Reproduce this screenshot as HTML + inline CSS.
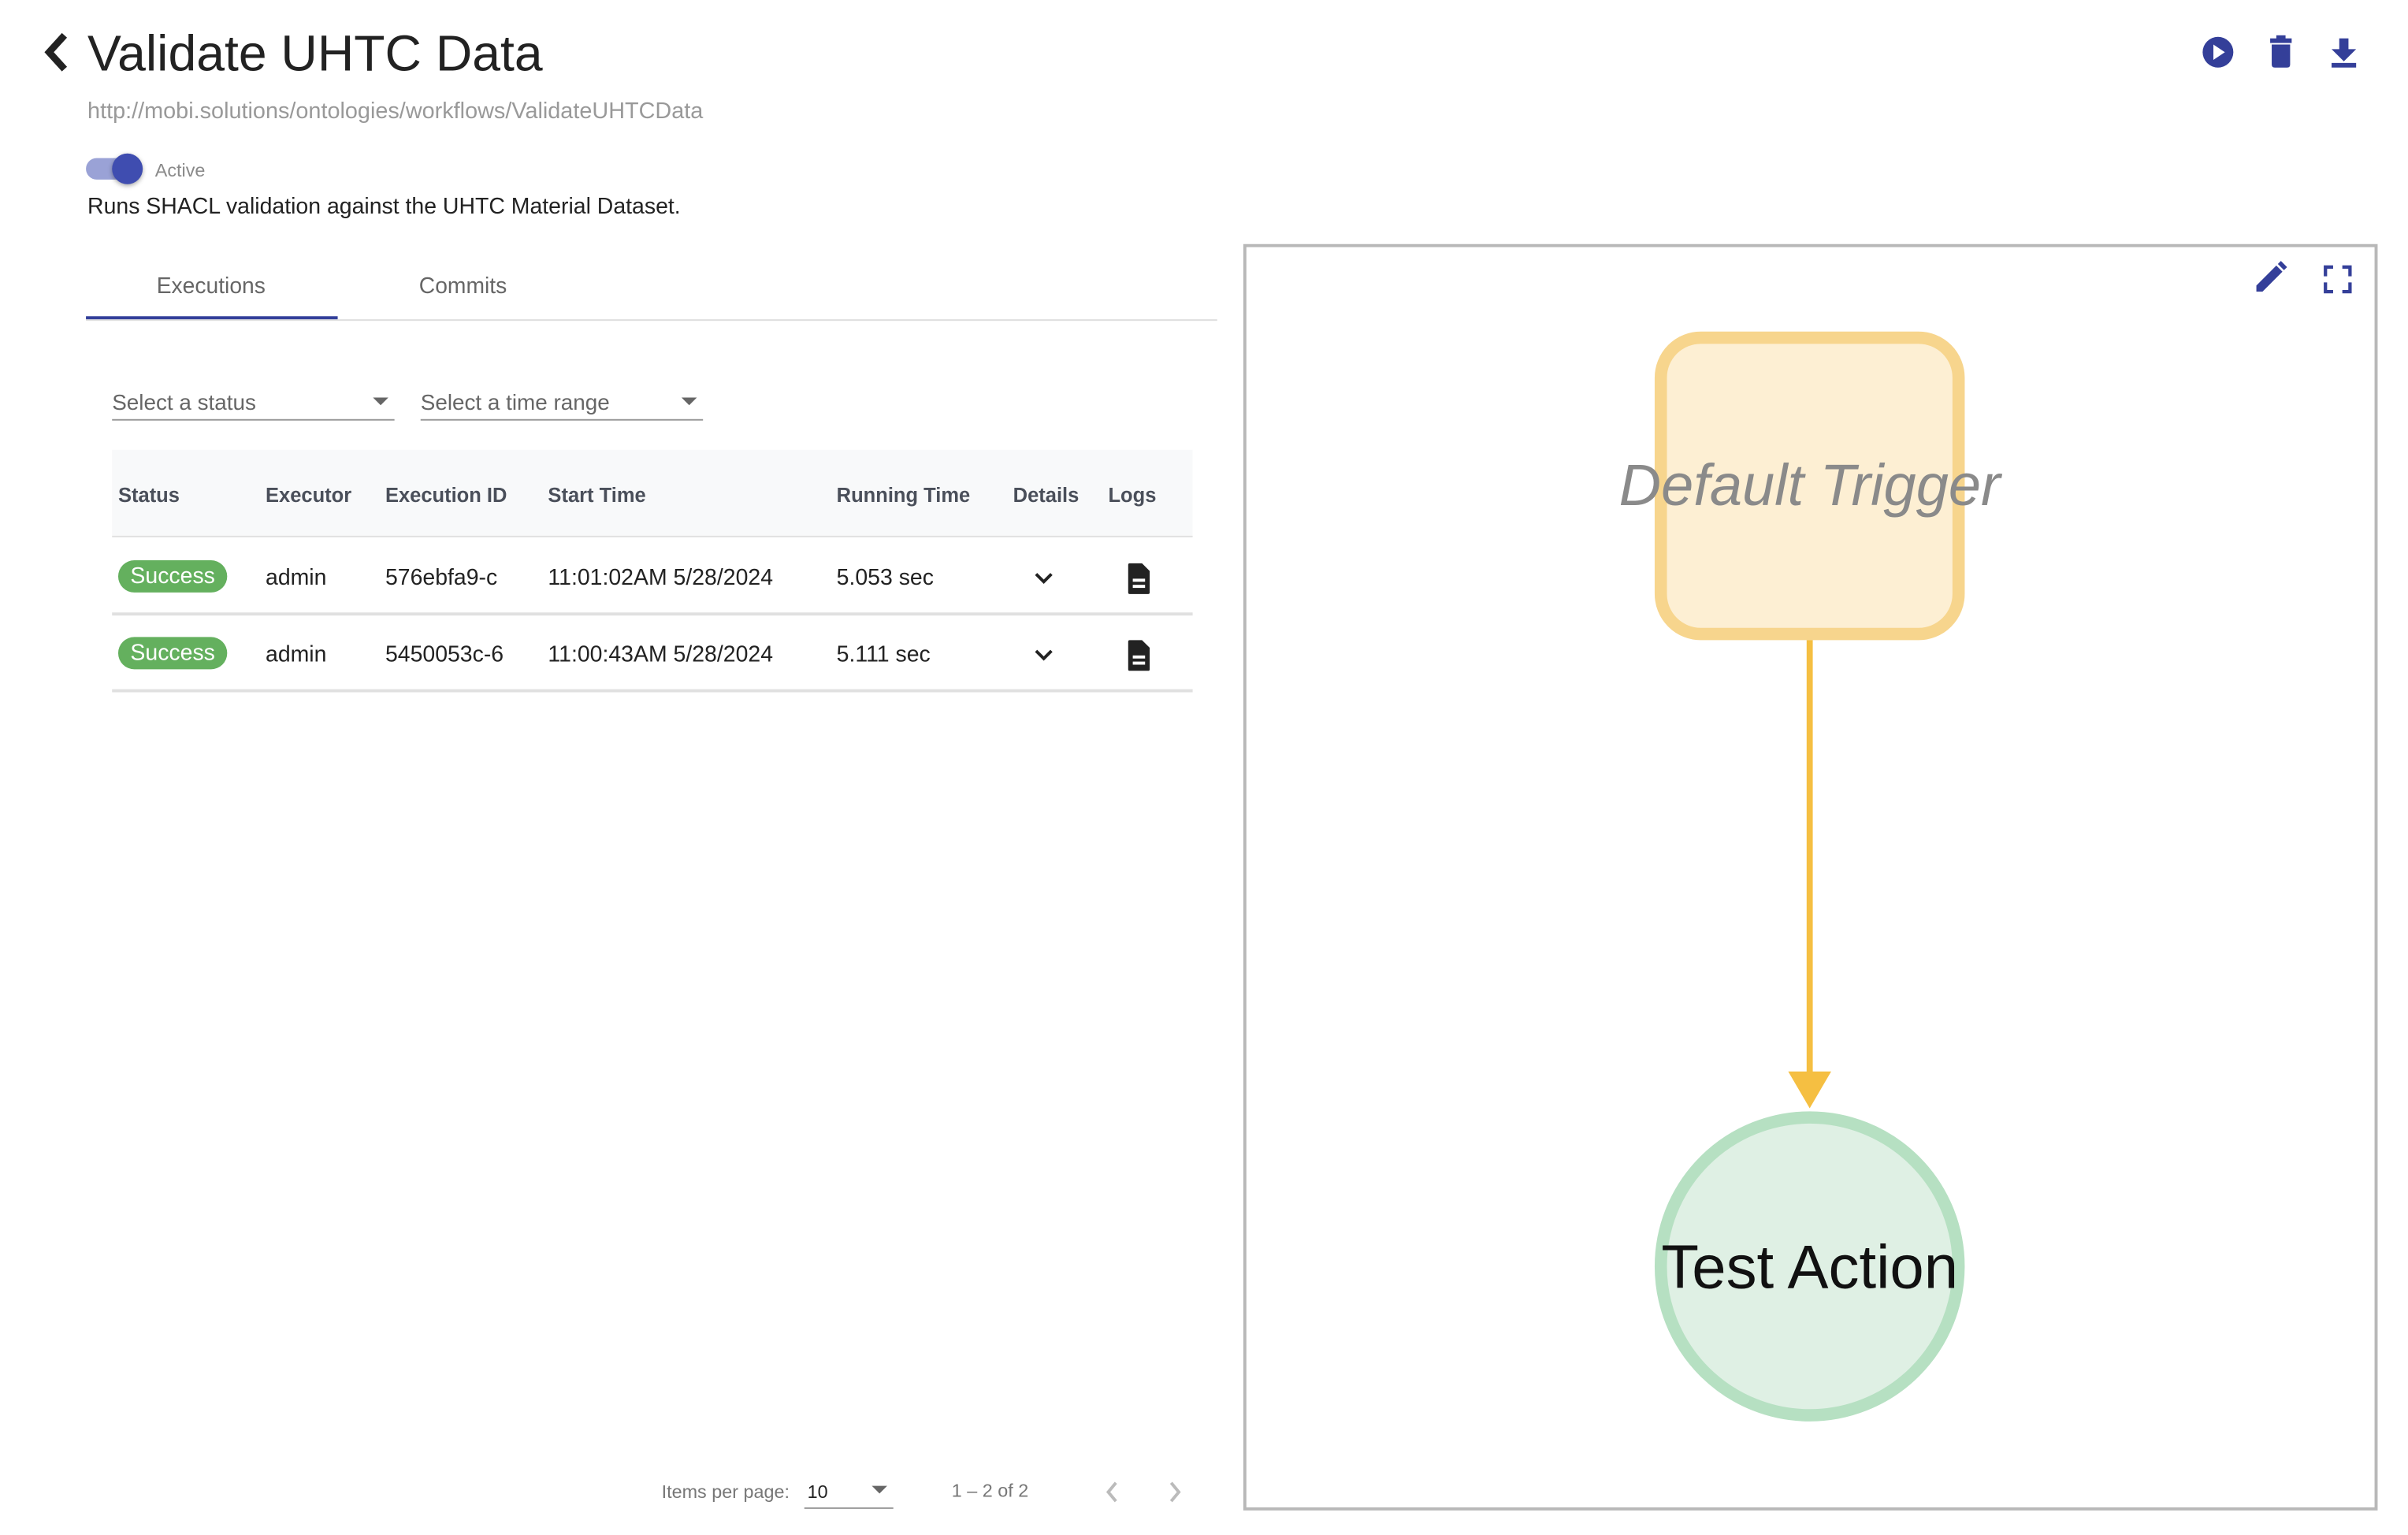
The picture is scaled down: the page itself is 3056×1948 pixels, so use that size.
<!DOCTYPE html>
<html><head><meta charset="utf-8"><style>
html,body{margin:0;padding:0;background:#fff;overflow:hidden}
body{width:3056px;height:1946px;font-family:"Liberation Sans",Arial,sans-serif}
#w{position:absolute;left:0;top:0;width:1570px;height:1000px;transform:scale(1.948);transform-origin:0 0}
.a{position:absolute;white-space:nowrap}
.th{font-size:13.1px;font-weight:bold;color:#4a4f5a;top:315px}
.td{font-size:14.6px;color:#222}
.badge{position:absolute;left:77px;width:71px;height:21px;border-radius:11px;background:#64b05e;color:#fff;font-size:14.6px;text-align:center;line-height:22px}
.hr{position:absolute;left:73px;width:704px;height:2px;background:#e0e0e0}
</style></head><body><div id="w">
<svg class="a" style="left:26px;top:20px" width="22" height="28" viewBox="0 0 22 28"><path d="M16 3 L6 14 L16 25" fill="none" stroke="#222" stroke-width="4.5" stroke-linejoin="miter"/></svg>
<div class="a" style="left:57px;top:16px;font-size:33px;color:#222">Validate UHTC Data</div>
<div class="a" style="left:57px;top:65px;font-size:14.8px;color:#999">http://mobi.solutions/ontologies/workflows/ValidateUHTCData</div>
<div class="a" style="left:56px;top:103px;width:34px;height:14px;border-radius:7px;background:#9aa2d6"></div>
<div class="a" style="left:73px;top:100px;width:20px;height:20px;border-radius:50%;background:#3f4db0;box-shadow:0 1px 3px rgba(0,0,0,.35)"></div>
<div class="a" style="left:101px;top:104px;font-size:12px;color:#8a8a8a">Active</div>
<div class="a" style="left:57px;top:127px;font-size:14.6px;color:#222">Runs SHACL validation against the UHTC Material Dataset.</div>

<div class="a" style="left:102px;top:179px;font-size:14.5px;color:#666">Executions</div>
<div class="a" style="left:273px;top:179px;font-size:14.5px;color:#666">Commits</div>
<div class="a" style="left:56px;top:208px;width:737px;height:1px;background:#ddd"></div>
<div class="a" style="left:56px;top:206px;width:164px;height:2px;background:#33409a"></div>

<div class="a" style="left:73px;top:255px;font-size:14.3px;color:#666">Select a status</div>
<div class="a" style="left:73px;top:273px;width:184px;height:1px;background:#999"></div>
<div class="a" style="left:243px;top:259px;border-left:5px solid transparent;border-right:5px solid transparent;border-top:5px solid #666"></div>
<div class="a" style="left:274px;top:255px;font-size:14.3px;color:#666">Select a time range</div>
<div class="a" style="left:274px;top:273px;width:184px;height:1px;background:#999"></div>
<div class="a" style="left:444px;top:259px;border-left:5px solid transparent;border-right:5px solid transparent;border-top:5px solid #666"></div>

<div class="a" style="left:73px;top:293px;width:704px;height:56px;background:#f8f9fa"></div>
<div class="a th" style="left:77px">Status</div>
<div class="a th" style="left:173px">Executor</div>
<div class="a th" style="left:251px">Execution ID</div>
<div class="a th" style="left:357px">Start Time</div>
<div class="a th" style="left:545px">Running Time</div>
<div class="a th" style="left:660px">Details</div>
<div class="a th" style="left:722px">Logs</div>
<div class="hr" style="top:349px;height:1px"></div>

<div class="badge" style="top:365px">Success</div>
<div class="a td" style="left:173px;top:369px">admin</div>
<div class="a td" style="left:251px;top:369px">576ebfa9-c</div>
<div class="a td" style="left:357px;top:369px">11:01:02AM 5/28/2024</div>
<div class="a td" style="left:545px;top:369px">5.053 sec</div>
<svg class="a" style="left:673px;top:372px" width="14" height="10"><path d="M2 2 L7 7 L12 2" fill="none" stroke="#222" stroke-width="2"/></svg>
<svg class="a" style="left:734px;top:366px" width="16" height="22" viewBox="0 0 16 22"><path d="M1 2 Q1 1 2 1 L10 1 L15 6 L15 20 Q15 21 14 21 L2 21 Q1 21 1 20Z" fill="#222"/><rect x="4" y="11" width="8" height="2" fill="#fff"/><rect x="4" y="15" width="8" height="2" fill="#fff"/></svg>
<div class="hr" style="top:399px"></div>

<div class="badge" style="top:415px">Success</div>
<div class="a td" style="left:173px;top:419px">admin</div>
<div class="a td" style="left:251px;top:419px">5450053c-6</div>
<div class="a td" style="left:357px;top:419px">11:00:43AM 5/28/2024</div>
<div class="a td" style="left:545px;top:419px">5.111 sec</div>
<svg class="a" style="left:673px;top:422px" width="14" height="10"><path d="M2 2 L7 7 L12 2" fill="none" stroke="#222" stroke-width="2"/></svg>
<svg class="a" style="left:734px;top:416px" width="16" height="22" viewBox="0 0 16 22"><path d="M1 2 Q1 1 2 1 L10 1 L15 6 L15 20 Q15 21 14 21 L2 21 Q1 21 1 20Z" fill="#222"/><rect x="4" y="11" width="8" height="2" fill="#fff"/><rect x="4" y="15" width="8" height="2" fill="#fff"/></svg>
<div class="hr" style="top:449px"></div>

<div class="a" style="left:431px;top:965px;font-size:12px;color:#777">Items per page:</div>
<div class="a" style="left:526px;top:965px;font-size:12px;color:#222">10</div>
<div class="a" style="left:524px;top:982px;width:58px;height:1px;background:#999"></div>
<div class="a" style="left:568px;top:968px;border-left:5px solid transparent;border-right:5px solid transparent;border-top:5px solid #666"></div>
<div class="a" style="left:620px;top:964px;font-size:12px;color:#777">1 – 2 of 2</div>
<svg class="a" style="left:716px;top:963px" width="60" height="18"><path d="M11 3 L6 9 L11 15" fill="none" stroke="#bbb" stroke-width="2"/><path d="M47 3 L52 9 L47 15" fill="none" stroke="#bbb" stroke-width="2"/></svg>

<svg class="a" style="left:1430px;top:20px" width="110" height="30" viewBox="0 0 110 30">
<circle cx="15" cy="14" r="10" fill="#343f99"/><path d="M12 9 L19.5 14 L12 19Z" fill="#fff"/>
<rect x="49" y="5" width="14" height="3" fill="#343f99"/><rect x="53" y="3" width="6" height="3" fill="#343f99"/><path d="M50 9 L62 9 L62 22 Q62 24 60 24 L52 24 Q50 24 50 22Z" fill="#343f99"/>
<rect x="94" y="5" width="6" height="8" fill="#343f99"/><path d="M89 12 L105 12 L97 20Z" fill="#343f99"/><rect x="89" y="21" width="16" height="3" fill="#343f99"/>
</svg>

<div class="a" style="left:810px;top:159px;width:735px;height:821px;border:2px solid #b8b8b8"></div>
<svg class="a" style="left:1466px;top:168px" width="70" height="26" viewBox="0 0 70 26">
<path d="M4 22 L4 18 L17 5 L21 9 L8 22Z" fill="#343f99"/><path d="M18 4 L20 2 L24 6 L22 8Z" fill="#343f99"/>
<path d="M49 12 L49 6 L54 6 M60 6 L65 6 L65 12 M65 16 L65 22 L60 22 M54 22 L49 22 L49 16" fill="none" stroke="#343f99" stroke-width="2.2"/>
</svg>

<svg class="a" style="left:0;top:0" width="1570" height="1000">
<rect x="1082" y="220" width="194" height="193" rx="26" fill="#fdefd3" stroke="#f7d58d" stroke-width="8"/>
<line x1="1179" y1="417" x2="1179" y2="700" stroke="#f5bf42" stroke-width="4"/>
<path d="M1165 698 L1193 698 L1179 722Z" fill="#f5bf42"/>
<circle cx="1179" cy="825" r="97" fill="#dff0e4" stroke="#b6e0c2" stroke-width="8"/>
<text x="1179" y="329" text-anchor="middle" font-family="Liberation Sans" font-style="italic" font-size="38" fill="#8a8a8a">Default Trigger</text>
<text x="1179" y="839" text-anchor="middle" font-family="Liberation Sans" font-size="40" fill="#111">Test Action</text>
</svg>
</div></body></html>
